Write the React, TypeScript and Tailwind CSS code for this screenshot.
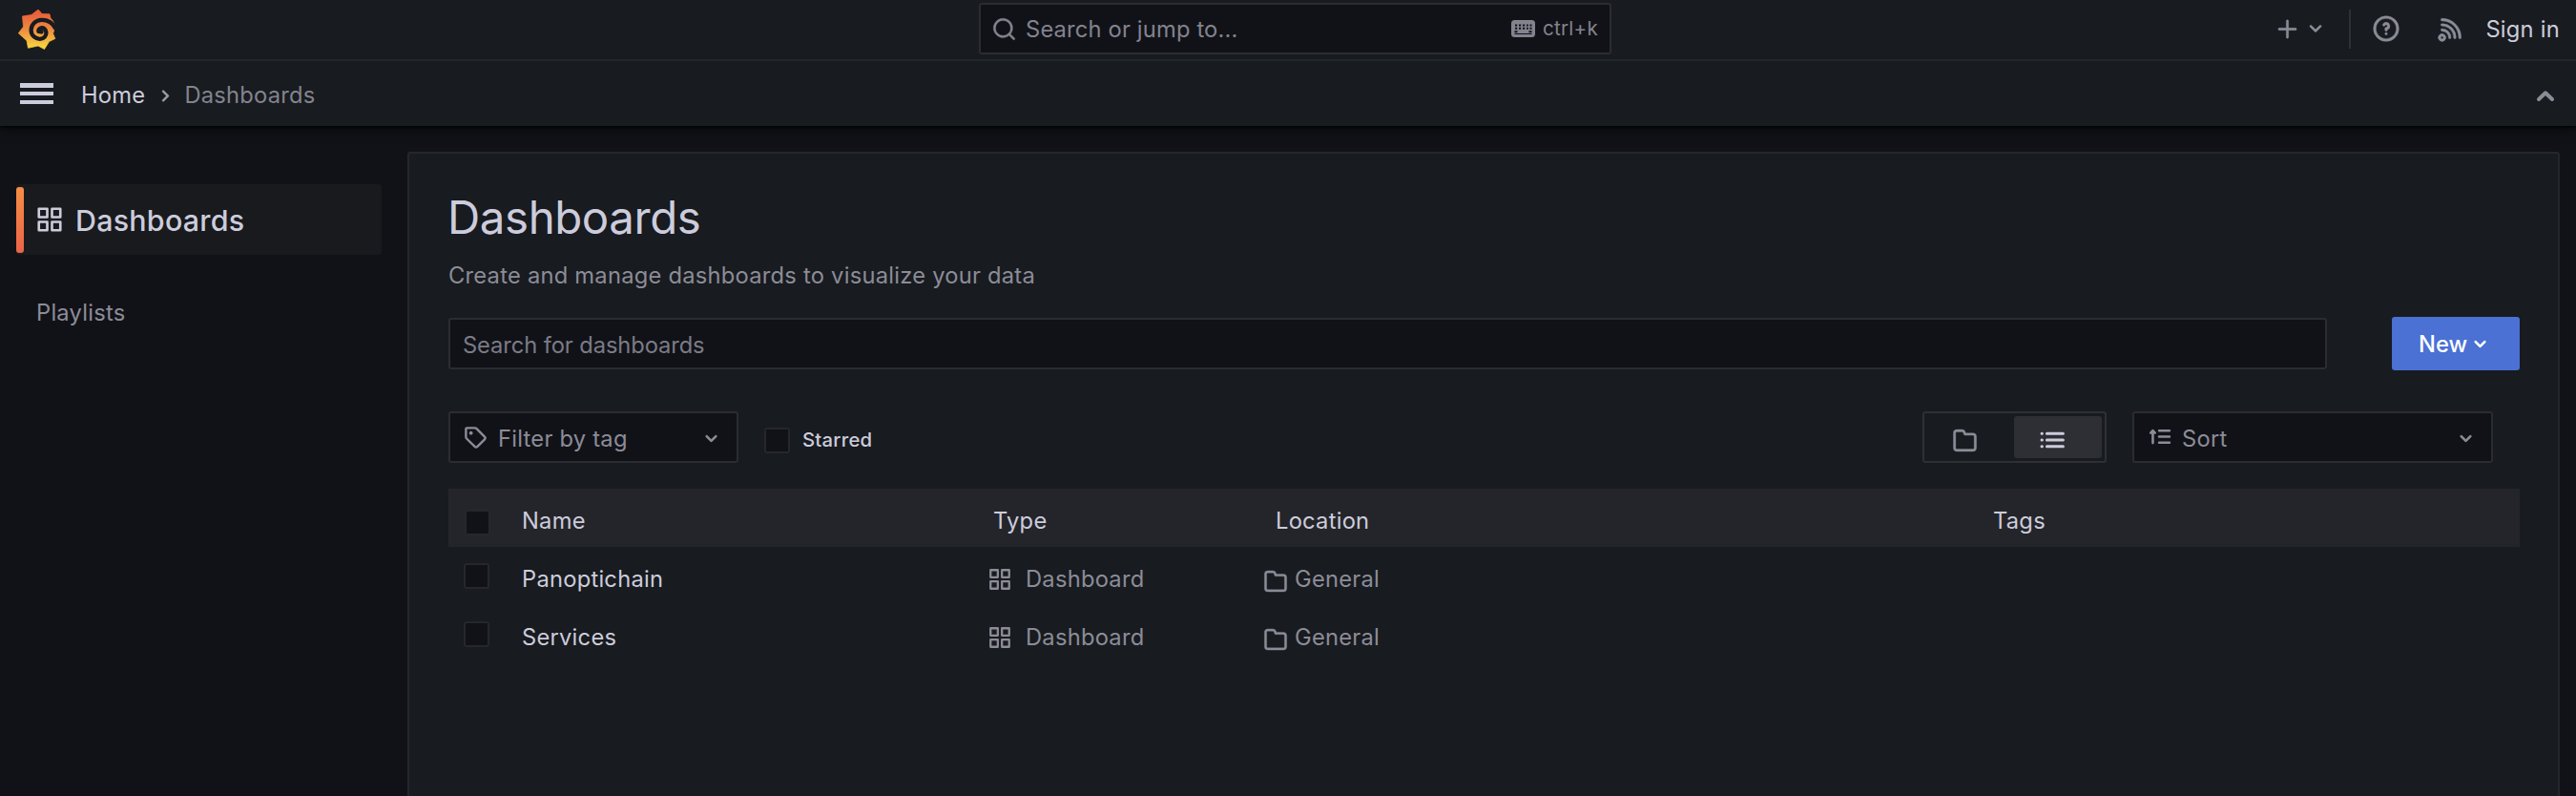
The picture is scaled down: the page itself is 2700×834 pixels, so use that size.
import type { ReactNode } from "react";

const paths = {
  folder:
    "M19,5.5H12.72l-.32-1a3,3,0,0,0-2.84-2H5a3,3,0,0,0-3,3v13a3,3,0,0,0,3,3H19a3,3,0,0,0,3-3V8.5A3,3,0,0,0,19,5.5Zm1,13a1,1,0,0,1-1,1H5a1,1,0,0,1-1-1V5.5a1,1,0,0,1,1-1H9.56a1,1,0,0,1,.95.68l.54,1.64A1,1,0,0,0,12,7.5h7a1,1,0,0,1,1,1Z",
  angleDown:
    "M17,9.17a1,1,0,0,0-1.41,0L12,12.71,8.46,9.17a1,1,0,0,0-1.41,0,1,1,0,0,0,0,1.42l4.24,4.24a1,1,0,0,0,1.42,0L17,10.59A1,1,0,0,0,17,9.17Z",
  search:
    "M21.71,20.29,18,16.61A9,9,0,1,0,16.61,18l3.68,3.68a1,1,0,0,0,1.42,0A1,1,0,0,0,21.71,20.29ZM11,18a7,7,0,1,1,7-7A7,7,0,0,1,11,18Z",
  plus: "M19,11H13V5a1,1,0,0,0-2,0v6H5a1,1,0,0,0,0,2h6v6a1,1,0,0,0,2,0V13h6a1,1,0,0,0,0-2Z",
  question:
    "M11.29,15.29a1.58,1.58,0,0,0-.12.15.76.76,0,0,0-.09.18.64.64,0,0,0-.06.18,1.36,1.36,0,0,0,0,.2.84.84,0,0,0,.08.38.9.9,0,0,0,.54.54.94.94,0,0,0,.76,0,.9.9,0,0,0,.54-.54A1,1,0,0,0,13,16a1,1,0,0,0-.29-.71A1,1,0,0,0,11.29,15.29ZM12,2A10,10,0,1,0,22,12,10,10,0,0,0,12,2Zm0,18a8,8,0,1,1,8-8A8,8,0,0,1,12,20ZM12,7A3,3,0,0,0,9.4,8.5a1,1,0,1,0,1.73,1A1,1,0,0,1,12,9a1,1,0,0,1,0,2,1,1,0,0,0-1,1v1a1,1,0,0,0,2,0v-.18A3,3,0,0,0,12,7Z",
  rss: "M2.88,16.88a3,3,0,0,0,0,4.24,3,3,0,0,0,4.24,0,3,3,0,0,0-4.24-4.24Zm2.83,2.83a1,1,0,0,1-1.42-1.42,1,1,0,0,1,1.42,0A1,1,0,0,1,5.71,19.71ZM5,12a1,1,0,0,0,0,2,5,5,0,0,1,5,5,1,1,0,0,0,2,0,7,7,0,0,0-7-7ZM5,8a1,1,0,0,0,0,2,9,9,0,0,1,9,9,1,1,0,0,0,2,0,11.08,11.08,0,0,0-3.22-7.78A11.08,11.08,0,0,0,5,8Zm10.61.39A15,15,0,0,0,5,4,1,1,0,0,0,5,6,13,13,0,0,1,18,19a1,1,0,0,0,2,0A14.88,14.88,0,0,0,15.61,8.39Z",
};

function Icon({ name, className }: { name: keyof typeof paths; className: string }) {
  return (
    <svg viewBox="0 0 24 24" fill="currentColor" stroke="currentColor" strokeWidth="0.3" className={`shrink-0 ${className}`}>
      <path d={paths[name]} />
    </svg>
  );
}

function AppsIcon({ className }: { className: string }) {
  return (
    <svg viewBox="0 0 24 24" fill="none" stroke="currentColor" strokeWidth="2.1" strokeLinejoin="round" className={`shrink-0 ${className}`}>
      <path d="M3 3h7v7H3ZM14 3h7v7h-7ZM3 14h7v7H3ZM14 14h7v7h-7Z" />
    </svg>
  );
}

function Logo() {
  return (
    <svg viewBox="18 10 42 42" className="size-[42px] shrink-0">
      <defs>
        <linearGradient id="flame" x1="0" y1="10" x2="0" y2="51" gradientUnits="userSpaceOnUse">
          <stop offset="0.1" stopColor="#e9603a" />
          <stop offset="0.5" stopColor="#ec8a40" />
          <stop offset="0.95" stopColor="#f8d13f" />
        </linearGradient>
      </defs>
      <path
        d="M40 10 44 14.500 52 14.800 53 19Q57.500 23 57.500 30L55.500 35 57.800 40.500 51.500 43.500 46.500 51.500 40 48 29.500 50.300 28 42.500 19.300 34.800 24.500 28 23.500 17 33 15.500Z"
        fill="url(#flame)"
        stroke="url(#flame)"
        strokeWidth="0.8"
        strokeLinejoin="round"
      />
      <path
        d="M58 29.500C54.500 22.500 48.500 20.700 43.500 20.800C36.500 21 32.600 26.500 32.600 31.500C32.600 37.500 37.500 41 42 40.800C46 40.600 49 37.500 48.300 33.300C47.700 30.300 45.500 28.900 43 29.300C40.800 29.800 40 31.500 40.500 33L43.500 33.500"
        fill="none"
        stroke="#181b1f"
        strokeWidth="4.300"
        strokeLinecap="round"
        strokeLinejoin="round"
      />
    </svg>
  );
}

function KeyboardIcon() {
  return (
    <svg viewBox="0 0 25 18" className="h-[18px] w-[25px] shrink-0">
      <rect width="25" height="18" rx="3.5" fill="currentColor" />
      <path
        d="M4 5.500h2.200M8 5.500h2.200M12 5.500h2.200M16 5.500h1.800M19.500 5.500h2M4 8.800h2.200M8 8.800h2.200M12 8.800h2.200M16 8.800h1.800M19.500 8.800h2M3.500 12.300h3M18.500 12.300h3"
        stroke="#111217"
        strokeWidth="2"
        fill="none"
      />
      <path d="M3.500 14.500h18" stroke="#111217" strokeWidth="1" />
    </svg>
  );
}

function TagIcon() {
  return (
    <svg viewBox="0 0 24 24" className="size-[27px] shrink-0" fill="none" stroke="currentColor" strokeWidth="2.1" strokeLinejoin="round">
      <path d="M3 4a1 1 0 0 1 1-1h7.500a2 2 0 0 1 1.400.600l7.500 7.600a1.800 1.800 0 0 1 0 2.500l-6.700 6.700a1.800 1.800 0 0 1-2.500 0L3.600 12.900A2 2 0 0 1 3 11.500Z" />
      <circle cx="7.700" cy="7.700" r="1.700" fill="currentColor" stroke="none" />
    </svg>
  );
}

function ListIcon() {
  return (
    <svg viewBox="0 0 26 18" className="h-[18px] w-[26px] shrink-0" fill="none" stroke="currentColor" strokeWidth="3" strokeLinecap="round">
      <path d="M2 2.300h.4M2 9h.4M2 15.700h.4M7.400 2.300h17M7.400 9h17M7.400 15.700h17" />
    </svg>
  );
}

function SortIcon() {
  return (
    <svg viewBox="0 0 24 18" className="-mt-px h-[17px] w-[24px] shrink-0" fill="none" stroke="currentColor" strokeWidth="2.7" strokeLinecap="round" strokeLinejoin="round">
      <path d="M4 16V2.500M1.600 4.800 4 2.200 6.400 4.800M11 2.300h11.500M11 9h11.500M11 15.700h11.500" />
    </svg>
  );
}

function Checkbox({ className = "" }: { className?: string }) {
  return <span className={`size-[27px] shrink-0 rounded-[3px] border-2 border-[#26272c] bg-[#111217] ${className}`} />;
}

function Cell({ className, children }: { className: string; children?: ReactNode }) {
  return <div className={`flex shrink-0 items-center whitespace-nowrap ${className}`}>{children}</div>;
}

const rows = [
  { name: "Panoptichain", type: "Dashboard", location: "General" },
  { name: "Services", type: "Dashboard", location: "General" },
];

export default function App() {
  return (
    <div className="flex h-[834px] w-[2700px] flex-col overflow-hidden bg-[#111217] font-['Inter',sans-serif] text-[23.7px] leading-[30px] tracking-[0.25px] text-[#ccccdc]">
      <header className="relative shrink-0 bg-[#181b1f] shadow-[0_1px_3px_#000,0_2px_12px_#07080a]">
        <div className="flex h-[64px] border-b-2 border-[#23262a] pt-[3px]">
          <div className="flex w-[1026px] items-start pt-[7px] pl-[18px]">
            <Logo />
          </div>
          <div className="flex h-[54px] w-[663px] items-center rounded-[3px] border-2 border-[#2b2c31] bg-[#111217] pr-[12px] pl-[11px] text-[#83838f]">
            <Icon name="search" className="size-[27px]" />
            <span className="ml-[9px] flex-1 pt-px tracking-[0.18px]">Search or jump to...</span>
            <KeyboardIcon />
            <span className="ml-[8px] text-[20.600px]">ctrl+k</span>
          </div>
          <div className="flex h-[54px] flex-1 items-center justify-end pr-[17px] text-[#8c8c98]">
            <Icon name="plus" className="size-[29px]" />
            <Icon name="angleDown" className="ml-px size-[28px]" />
            <span className="ml-[21px] h-[41px] w-[2px] bg-[#2e3035]" />
            <Icon name="question" className="ml-[21px] size-[32px]" />
            <Icon name="rss" className="ml-[36px] size-[32px]" />
            <span className="ml-[20px] pt-px text-[#ccccdc]">Sign in</span>
          </div>
        </div>
        <div className="flex h-[68px] items-center pr-[17px] pl-[21px]">
          <div className="flex h-[22px] w-[35px] flex-col justify-between">
            <span className="h-[4.500px] bg-[#ccccdc]" />
            <span className="h-[4.500px] bg-[#ccccdc]" />
            <span className="h-[4.500px] bg-[#ccccdc]" />
          </div>
          <span className="ml-[29px] pt-[3px]">Home</span>
          <Icon name="angleDown" className="mt-[5px] ml-[8px] size-[27px] -rotate-90 text-[#9c9ca8]" />
          <span className="ml-[6px] flex-1 pt-[3px] text-[#83838f]">Dashboards</span>
          <svg viewBox="0 0 20 13" className="mt-[5px] mr-[5px] h-[13px] w-[20px]" fill="none" stroke="#8c8c98" strokeWidth="4" strokeLinecap="round" strokeLinejoin="round">
            <path d="M3 10 10 3.300 17 10" />
          </svg>
        </div>
      </header>

      <div className="flex flex-1 pt-[27px]">
        <nav className="w-[427px] shrink-0 pt-[34px] pl-[17px]">
          <div className="flex h-[74px] w-[383px] items-center rounded-[3px] bg-[#181a1d] text-[30.400px] font-medium">
            <span className="h-[69px] w-[8px] rounded-[3px] bg-linear-to-b from-[#f58e45] to-[#ea6348]" />
            <AppsIcon className="ml-[12px] size-[30px]" />
            <span className="ml-[12px] pt-px">Dashboards</span>
          </div>
          <div className="mt-[46px] pl-[21px] text-[#8c8c98]">Playlists</div>
        </nav>

        <main className="h-[720px] w-[2256px] shrink-0 rounded-[3px] border-2 border-[#23262a] bg-[#181b1f] pr-[40px] pl-[41px]">
          <h1 className="mt-[37px] -ml-px text-[47.400px] leading-[60px] tracking-[-0.4px]">Dashboards</h1>
          <p className="mt-[16px] text-[#8c8c98]">Create and manage dashboards to visualize your data</p>
          <div className="mt-[28px] flex items-center justify-between">
            <div className="flex h-[54px] w-[1969px] items-center rounded-[3px] border-2 border-[#2b2c31] bg-[#111217] pt-[3px] pl-[13px] tracking-[-0.08px] text-[#7b7b87]">
              Search for dashboards
            </div>
            <button className="flex h-[56px] w-[134px] items-center rounded-[3px] bg-[#4a71d3] pl-[28px] font-medium text-white">
              <span className="pt-[2px] tracking-normal">New</span>
              <Icon name="angleDown" className="size-[27px]" />
            </button>
          </div>

          <div className="mt-[43px] flex h-[54px] items-center pr-[28px]">
            <div className="flex h-[54px] w-[304px] items-center rounded-[3px] border-2 border-[#2b2c31] bg-[#111217] pr-[13px] pl-[13px] text-[#8c8c98]">
              <TagIcon />
              <span className="ml-[10px] flex-1 pt-[3px]">Filter by tag</span>
              <Icon name="angleDown" className="mt-[3px] size-[27px]" />
            </div>
            <Checkbox className="mt-[6px] ml-[27px]" />
            <span className="mt-[5px] ml-[13px] flex-1 text-[20.300px] font-medium">Starred</span>
            <div className="flex h-[54px] w-[193px] items-center rounded-[3px] border-2 border-[#2e3035] px-[3px]">
              <div className="flex w-[91px] pt-[6px] pl-[25px] text-[#8c8c98]">
                <Icon name="folder" className="size-[29px]" />
              </div>
              <div className="flex h-[44px] w-[92px] items-center justify-center rounded-[3px] bg-[#2e2f34] pt-[6px] pr-[12px]">
                <ListIcon />
              </div>
            </div>
            <div className="ml-[27px] flex h-[54px] w-[378px] items-center rounded-[3px] border-2 border-[#2b2c31] bg-[#111217] pr-[13px] pl-[15px] text-[#8c8c98]">
              <SortIcon />
              <span className="ml-[11px] flex-1 pt-[3px]">Sort</span>
              <Icon name="angleDown" className="mt-[3px] size-[27px]" />
            </div>
          </div>

          <div className="mt-[27px] flex h-[61px] bg-[#24252a] pt-[7px] pl-[17px]">
            <Cell className="w-[60px]">
              <Checkbox className="mt-[3px]" />
            </Cell>
            <Cell className="w-[494px]">Name</Cell>
            <Cell className="w-[296px]">Type</Cell>
            <Cell className="w-[752px]">Location</Cell>
            <Cell className="flex-1">Tags</Cell>
          </div>
          {rows.map((row) => (
            <div key={row.name} className="flex h-[61px] pt-[7px] pl-[16px]">
              <Cell className="w-[61px]">
                <Checkbox className="-mt-[7px]" />
              </Cell>
              <Cell className="w-[488px]">{row.name}</Cell>
              <Cell className="w-[288px] text-[#8c8c98]">
                <AppsIcon className="size-[26px]" />
                <span className="ml-[14px]">{row.type}</span>
              </Cell>
              <Cell className="flex-1 text-[#8c8c98]">
                <Icon name="folder" className="mt-[3px] size-[28px]" />
                <span className="ml-[6px]">{row.location}</span>
              </Cell>
            </div>
          ))}
        </main>
      </div>
    </div>
  );
}
